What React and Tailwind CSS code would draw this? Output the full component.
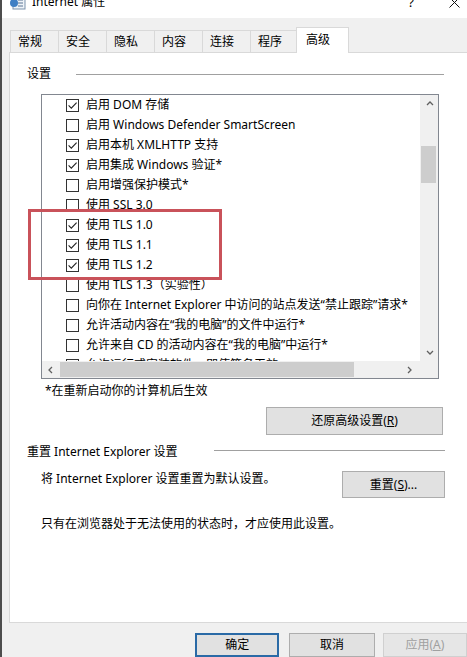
import React from 'react';

const items = [
  [true, '启用 DOM 存储'],
  [false, '启用 Windows Defender SmartScreen'],
  [true, '启用本机 XMLHTTP 支持'],
  [true, '启用集成 Windows 验证*'],
  [false, '启用增强保护模式*'],
  [false, '使用 SSL 3.0'],
  [true, '使用 TLS 1.0'],
  [true, '使用 TLS 1.1'],
  [true, '使用 TLS 1.2'],
  [false, '使用 TLS 1.3（实验性）'],
  [false, '向你在 Internet Explorer 中访问的站点发送“禁止跟踪”请求*'],
  [false, '允许活动内容在“我的电脑”的文件中运行*'],
  [false, '允许来自 CD 的活动内容在“我的电脑”中运行*'],
  [false, '允许运行或安装软件，即使签名无效'],
];

const tabs = ['常规', '安全', '隐私', '内容', '连接', '程序'];

function Check({ on }) {
  return (
    <span className="w-[13px] h-[13px] border border-[#333333] bg-white flex items-center justify-center shrink-0">
      {on && (
        <svg width="11" height="11" viewBox="0 0 11 11">
          <path d="M1.6 5.4 L4.3 8.1 L9.6 2.6" fill="none" stroke="#222" strokeWidth="1.1" />
        </svg>
      )}
    </span>
  );
}

function Chevron({ dir }) {
  const d = {
    up: 'M1 5 L4 2 L7 5',
    down: 'M1 2 L4 5 L7 2',
    left: 'M5 1 L2 4 L5 7',
    right: 'M2 1 L5 4 L2 7',
  }[dir];
  return (
    <svg width="8" height="8" viewBox="0 0 8 8">
      <path d={d} fill="none" stroke="#606060" strokeWidth="1.3" />
    </svg>
  );
}

export default function App() {
  return (
    <div className="w-[467px] h-[657px] overflow-hidden bg-[#f0f0f0] border-l-2 border-[#4d4d4d] font-['Noto_Sans','Noto_Sans_CJK_SC',sans-serif] text-[12px] text-black">
      {/* title bar */}
      <div className="h-[18px] bg-white overflow-hidden">
        <div className="-mt-[8px] h-[20px] flex items-center">
          <svg className="ml-[8px]" width="16" height="16" viewBox="0 0 16 16">
            <rect x="3" y="1" width="12" height="14" fill="#eef3f8" stroke="#7d93ad" />
            <path d="M8 6 H13 M8 9 H13 M8 12 H13" stroke="#5a7494" />
            <circle cx="4" cy="9" r="4" fill="#3f7fc4" />
          </svg>
          <span className="ml-[6px] leading-[20px]">Internet 属性</span>
          <span className="ml-auto leading-[20px] text-[13px]">?</span>
          <svg className="ml-[35px] mr-[7px]" width="11" height="11" viewBox="0 0 11 11">
            <path d="M0.5 0.5 L10.5 10.5 M10.5 0.5 L0.5 10.5" stroke="#111" strokeWidth="1" />
          </svg>
        </div>
      </div>

      {/* tabs */}
      <div className="h-[34px] flex items-end pl-[8px]">
        {tabs.map((t, i) => (
          <div
            key={t}
            className={`h-[22px] w-[48px] border-t border-l border-[#d9d9d9] pl-[7px] pt-[3px] leading-[16px] ${i === tabs.length - 1 ? 'border-r' : ''}`}
          >
            {t}
          </div>
        ))}
        <div className="relative top-[1px] z-10 -ml-[2px] h-[26px] w-[53px] bg-white border-t border-l border-r border-[#d9d9d9] pl-[9px] pt-[4px] leading-[16px]">
          高级
        </div>
      </div>

      {/* panel */}
      <div className="relative ml-[7px] h-[571px] bg-white border-t border-l border-b border-[#d9d9d9]">
        <div className="mt-[13px] pl-[17px] flex items-center h-[16px]">
          <span className="leading-[16px]">设置</span>
          <div className="ml-[25px] w-[368px] h-px bg-[#a0a0a0]" />
        </div>

        {/* list box */}
        <div className="mt-[12px] ml-[31px] w-[398px] h-[285px] border border-[#828790] flex flex-col">
          <div className="flex h-[266px]">
            <div className="w-[378px] overflow-hidden">
              {items.map(([on, label], i) => (
                <div key={i} className="h-[20px] flex items-center pl-[24px] gap-[7px] whitespace-nowrap leading-[16px]">
                  <Check on={on} />
                  <span>{label}</span>
                </div>
              ))}
            </div>
            <div className="w-[18px] bg-[#f0f0f0] flex flex-col">
              <div className="h-[17px] flex items-center justify-center pl-[1px]">
                <Chevron dir="up" />
              </div>
              <div className="mt-[34px] ml-[1px] w-[15px] h-[37px] bg-[#cdcdcd]" />
              <div className="mt-auto h-[17px] flex items-center justify-center pl-[1px]">
                <Chevron dir="down" />
              </div>
            </div>
          </div>
          <div className="flex h-[17px]">
            <div className="w-[378px] bg-[#f0f0f0] flex items-center">
              <div className="w-[17px] flex justify-center">
                <Chevron dir="left" />
              </div>
              <div className="ml-[1px] w-[294px] h-[15px] bg-[#cdcdcd]" />
              <div className="ml-auto w-[17px] flex justify-center mr-[2px]">
                <Chevron dir="right" />
              </div>
            </div>
            <div className="w-[18px] bg-[#f0f0f0]" />
          </div>
        </div>

        <div className="mt-[4px] pl-[35px] leading-[16px]">*在重新启动你的计算机后生效</div>

        <div className="mt-[8px] ml-[256px] w-[177px] h-[28px] bg-[#e1e1e1] border border-[#adadad] flex items-center justify-center">
          还原高级设置(<span className="underline">R</span>)
        </div>

        <div className="mt-[9px] pl-[17px] flex items-center h-[16px]">
          <span className="leading-[16px]">重置 Internet Explorer 设置</span>
          <div className="ml-auto mr-[22px] -mt-[4px] w-[231px] h-px bg-[#a0a0a0]" />
        </div>

        <div className="mt-[11px] pl-[31px] flex items-start">
          <span className="leading-[16px]">将 Internet Explorer 设置重置为默认设置。</span>
          <div className="ml-auto mr-[22px] w-[103px] h-[27px] bg-[#e1e1e1] border border-[#adadad] flex items-center justify-center">
            重置(<span className="underline">S</span>)...
          </div>
        </div>

        <div className="mt-[18px] pl-[31px] leading-[16px]">只有在浏览器处于无法使用的状态时，才应使用此设置。</div>

        {/* highlight box */}
        <div className="absolute left-[18px] top-[156px] w-[194px] h-[71px] border-[3px] border-[#c9525a]" />
      </div>

      {/* dialog buttons */}
      <div className="mt-[10px] flex">
        <div className="ml-[193px] w-[85px] h-[24px] bg-[#e1e1e1] border-2 border-[#2a6aa6] flex items-center justify-center">确定</div>
        <div className="ml-[10px] w-[86px] h-[24px] bg-[#e1e1e1] border border-[#adadad] flex items-center justify-center">取消</div>
        <div className="ml-[8px] w-[85px] h-[24px] bg-[#e6e6e6] border border-[#d0d0d0] text-[#a0a0a0] flex items-center justify-center">
          应用(<span className="underline">A</span>)
        </div>
      </div>
    </div>
  );
}
